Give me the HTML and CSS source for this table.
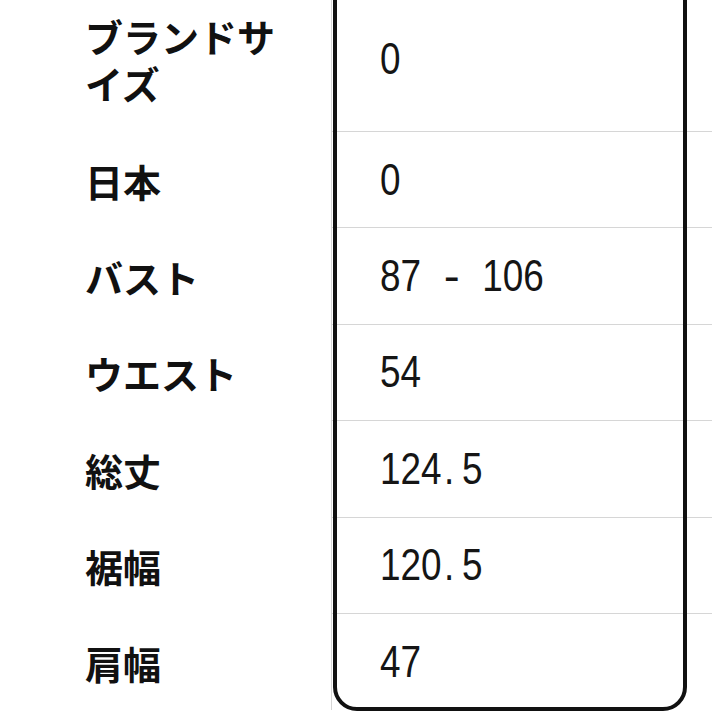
FILE: index.html
```html
<!DOCTYPE html>
<html lang="ja">
<head>
<meta charset="utf-8">
<title>サイズ表</title>
<link rel="stylesheet" href="styles.css">
</head>
<body>
<div class="sheet">
  <div class="table">
    <div class="label">ブランドサイズ</div>
    <div class="value"><span class="num">0</span></div>

    <div class="label">日本</div>
    <div class="value"><span class="num">0</span></div>

    <div class="label">バスト</div>
    <div class="value"><span class="num">87<span class="cell"></span><span class="cell dash">-</span><span class="cell"></span>106</span></div>

    <div class="label">ウエスト</div>
    <div class="value"><span class="num">54</span></div>

    <div class="label">総丈</div>
    <div class="value"><span class="num">124<span class="cell pt">.</span>5</span></div>

    <div class="label">裾幅</div>
    <div class="value"><span class="num">120<span class="cell pt">.</span>5</span></div>

    <div class="label">肩幅</div>
    <div class="value last"><span class="num">47</span></div>
  </div>
  <div class="frame"></div>
</div>
</body>
</html>
```
FILE: styles.css
```css
html, body {
  margin: 0;
  padding: 0;
  background: #ffffff;
  overflow: hidden;
}

.sheet {
  position: relative;
  width: 712px;
  height: 712px;
  overflow: hidden;
}

.table {
  display: grid;
  grid-template-columns: 332px 1fr;
  grid-template-rows: 146px repeat(6, 96.4px);
  margin-top: -14px;
}

.label {
  display: flex;
  align-items: center;
  padding: 0 40px 0 85px;
  border-right: 1px solid #d6d6d6;
  font-family: "Noto Sans CJK JP", "Noto Sans", sans-serif;
  font-weight: 700;
  font-size: 38px;
  line-height: 47px;
  color: #111111;
}

.value {
  display: flex;
  align-items: center;
  padding-left: 48px;
  border-bottom: 1px solid #d6d6d6;
  font-family: "Liberation Sans", Arial, sans-serif;
  font-size: 45px;
  color: #151515;
  white-space: pre;
}

.value.last {
  border-bottom: none;
}

.num {
  display: inline-block;
  transform: scaleX(0.82);
  transform-origin: left center;
}

.cell {
  display: inline-block;
  width: 24.9px;
  text-align: center;
}

.cell.pt {
  text-align: left;
  padding-left: 3px;
  box-sizing: border-box;
}

.cell.dash {
  transform: scaleX(1.3);
}

.frame {
  position: absolute;
  left: 333px;
  top: -40px;
  width: 354px;
  height: 751px;
  box-sizing: border-box;
  border: 4px solid #111111;
  border-radius: 24px;
  pointer-events: none;
}
```
